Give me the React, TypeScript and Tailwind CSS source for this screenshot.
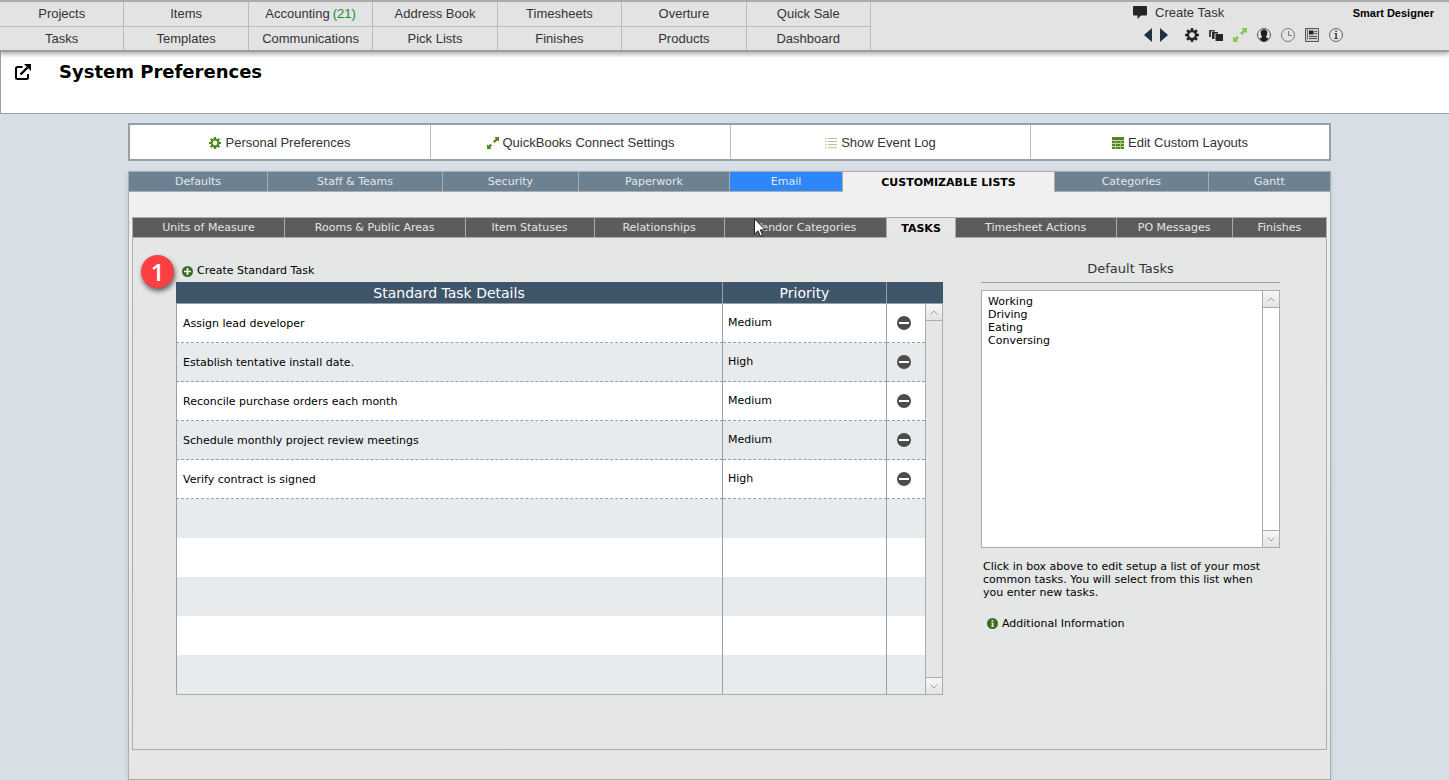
import { useState, type ReactNode } from 'react'
import clsx from 'clsx'

const NAV = [
  ['Projects', 'Items', 'Accounting', 'Address Book', 'Timesheets', 'Overture', 'Quick Sale'],
  ['Tasks', 'Templates', 'Communications', 'Pick Lists', 'Finishes', 'Products', 'Dashboard'],
]

const MAIN_TABS = [
  { label: 'Defaults', size: 'flex-[139]' },
  { label: 'Staff & Teams', size: 'flex-[175]' },
  { label: 'Security', size: 'flex-[136]' },
  { label: 'Paperwork', size: 'flex-[151]' },
  { label: 'Email', size: 'flex-[113]' },
  { label: 'Customizable Lists', size: 'flex-[212]' },
  { label: 'Categories', size: 'flex-[154]' },
  { label: 'Gantt', size: 'flex-[122]' },
]

const LIST_TABS = [
  { label: 'Units of Measure', size: 'flex-[152]' },
  { label: 'Rooms & Public Areas', size: 'flex-[181]' },
  { label: 'Item Statuses', size: 'flex-[129]' },
  { label: 'Relationships', size: 'flex-[130]' },
  { label: 'Vendor Categories', size: 'flex-[163]' },
  { label: 'Tasks', size: 'flex-[68]' },
  { label: 'Timesheet Actions', size: 'flex-[161]' },
  { label: 'PO Messages', size: 'flex-[116]' },
  { label: 'Finishes', size: 'flex-[94]' },
]

const TASKS = [
  { details: 'Assign lead developer', priority: 'Medium' },
  { details: 'Establish tentative install date.', priority: 'High' },
  { details: 'Reconcile purchase orders each month', priority: 'Medium' },
  { details: 'Schedule monthly project review meetings', priority: 'Medium' },
  { details: 'Verify contract is signed', priority: 'High' },
]

const ROW_COUNT = 10

/* Icons */

const GearIcon = ({ className }: { className?: string }) => (
  <svg viewBox="0 0 14 14" className={className} fill="none" stroke="currentColor">
    <circle cx="7" cy="7" r="4" strokeWidth="2.4" />
    {[0, 45, 90, 135].map(angle => (
      <path
        key={angle}
        d="M7 0v2.4M7 11.6V14"
        strokeWidth="2.6"
        transform={`rotate(${angle} 7 7)`}
      />
    ))}
  </svg>
)

const ExpandIcon = ({ className }: { className?: string }) => (
  <svg viewBox="0 0 14 14" className={className} fill="currentColor">
    <path d="M8.500 0H14v5.500l-1.700-1.700-3.300 3.300-2-2 3.300-3.300zM0 8.500l1.700 1.700 2.300-2.300 2 2-2.300 2.300L5.500 14H0z" />
  </svg>
)

const ListIcon = () => (
  <svg viewBox="0 0 12 12" className="size-3" fill="none" stroke="#a9c88b">
    <path d="M0 1.5h1.5M3 1.5h9M0 4.5h1.5M3 4.5h9M0 7.5h1.5M3 7.5h9" />
    <path d="M0 10.500h1.500M3 10.500h9" stroke="#cfdfbf" strokeWidth="2" />
  </svg>
)

const GridIcon = () => (
  <svg viewBox="0 0 12 12" className="size-3">
    <path fill="#54861f" d="M0 0h12v12H0z" />
    <path stroke="#c6d8b2" d="M0 3.5h12M0 6.5h12M0 9.5h12" />
    <path stroke="#a3bf84" d="M3.5 3v9M8.5 3v9" />
  </svg>
)

const SpeechIcon = () => (
  <svg viewBox="0 0 14 13" className="h-[13px] w-3.5" fill="#262626">
    <path d="M1 0h12q1 0 1 1v7.5q0 1-1 1H8L4.5 13V9.5H1q-1 0-1-1V1q0-1 1-1z" />
  </svg>
)

const StackIcon = () => (
  <svg viewBox="0 0 14 14" className="size-3.5" fill="#262626">
    <path d="M0 2h6v1.500H2V9H0z" fill="#444" />
    <path d="M3 4h6v1.500H5.500V11H3z" />
    <path d="M6.500 6H14v7H6.500z" />
  </svg>
)

const PersonIcon = () => (
  <svg viewBox="0 0 14 14" className="size-3.5">
    <circle cx="7" cy="7" r="6.5" fill="none" stroke="#555" />
    <path
      fill="#1d1d1d"
      d="M7 1.500c2.200 0 3.300 1.500 3.300 3.400 0 1.300-.5 2.600-1.200 3.300v1l2.400 1.300A6.200 6.200 0 0 1 7 13.500a6.200 6.200 0 0 1-4.500-3L4.900 9.200v-1C4.200 7.500 3.700 6.200 3.700 4.900 3.700 3 4.800 1.500 7 1.500z"
    />
  </svg>
)

const ClockIcon = () => (
  <svg viewBox="0 0 14 14" className="size-3.5" fill="none" stroke="#777">
    <circle cx="7" cy="7" r="6.5" />
    <path d="M7.500 3v4.500H11" />
  </svg>
)

const NewsIcon = () => (
  <svg viewBox="0 0 14 14" className="size-3.5" fill="none" stroke="#555">
    <path d="M.5 .5h13v13H.5z" fill="#d0d0d0" />
    <path d="M2.500 1v10.500" stroke="#777" />
    <path d="M4 2.500h4.500v4H4z" fill="#222" stroke="none" />
    <path d="M9.500 3.500h2.500M9.500 5.500h2.500M4 8.500h8M4 10.500h8" />
  </svg>
)

const InfoIcon = () => (
  <svg viewBox="0 0 14 14" className="size-3.5" fill="none" stroke="#444">
    <circle cx="7" cy="7" r="6.5" stroke="#666" />
    <path d="M5.500 5.500H7M5.300 10.500h3.600" />
    <path d="M7.100 5v5.500" strokeWidth="1.600" />
    <path d="M6.300 2.600h1.600v1.500H6.300z" fill="#444" stroke="none" />
  </svg>
)

const PopOutIcon = () => (
  <svg viewBox="0 0 16 16" className="size-4" fill="none" stroke="#000" strokeWidth="2">
    <path d="M7.500 3H2.500Q1 3 1 4.500v9Q1 15 2.500 15h9q1.500 0 1.500-1.500V10" />
    <path d="M5.500 10.500l7-7" strokeWidth="2.400" />
    <path d="M9 0h7v7z" fill="#000" stroke="none" />
  </svg>
)

const PlusIcon = () => (
  <svg viewBox="0 0 12 12" className="size-[11px]">
    <circle cx="6" cy="6" r="6" fill="#3d6b1e" />
    <path d="M6 2.200v7.600M2.200 6h7.600" stroke="#fff" strokeWidth="1.800" />
  </svg>
)

const SolidInfoIcon = () => (
  <svg viewBox="0 0 12 12" className="size-[11px]">
    <circle cx="6" cy="6" r="6" fill="#3d6b1e" />
    <path d="M5 2.200h2v1.600H5zM4.500 4.800H7v3.700h.8v1H4.500v-1h.7V5.800h-.7z" fill="#e5e7e6" />
  </svg>
)

const MinusIcon = () => (
  <svg viewBox="0 0 14 14" className="size-3.5">
    <circle cx="7" cy="7" r="7" fill="#4c4c4c" />
    <path d="M2 6h10v2H2z" fill="#fff" />
  </svg>
)

const PointerIcon = () => (
  <svg viewBox="0 0 12 19" className="h-[19px] w-3">
    <path
      d="M.5.8v15.400l3.500-3.400 2.300 5.300 2.300-1-2.300-5.200h5z"
      fill="#fff"
      stroke="#1a1f33"
    />
  </svg>
)

/* Parts */

const TabStrip = ({ tabs, active, dark, onSelect }: {
  tabs: { label: string; size: string }[]
  active: string
  dark?: boolean
  onSelect: (label: string) => void
}) => (
  <div role="tablist" className="flex h-[21px] border-l border-t border-[#acacac]">
    {tabs.map(({ label, size }) => {
      const isActive = label === active
      return (
        <button
          key={label}
          role="tab"
          aria-selected={isActive}
          onClick={() => onSelect(label)}
          className={clsx(
            'whitespace-nowrap border-r border-[#acacac] pt-px text-[11px] leading-[18px]',
            size,
            isActive && 'font-bold uppercase text-black',
            isActive && (dark ? 'bg-[#e6e8e7]' : 'bg-[#f0f0f0]'),
            !isActive && 'border-b text-[#e6e6e6]',
            !isActive && dark && 'bg-[#5c5c5c]',
            !isActive && !dark && (label === 'Email' ? 'bg-[#2e86fb]' : 'bg-[#6c8293]')
          )}
        >
          {label}
        </button>
      )
    })}
  </div>
)

const ScrollButton = ({ down }: { down?: boolean }) => (
  <button
    aria-label={down ? 'Scroll down' : 'Scroll up'}
    className={clsx(
      'flex h-[17px] w-4 items-center justify-center border-[#acacac] bg-linear-to-b from-[#f6f6f6] to-[#e4e4e4]',
      down ? 'border-t' : 'border-b'
    )}
  >
    <svg viewBox="0 0 8 5" className="h-[5px] w-2" fill="none" stroke="#a0a0a0">
      <path d={down ? 'M.5.5L4 4 7.500.5' : 'M.5 4.500L4 1l3.500 3.500'} />
    </svg>
  </button>
)

const ToolButton = ({ label, children }: { label: string; children: ReactNode }) => (
  <button aria-label={label} className="flex size-6 items-center justify-center">
    {children}
  </button>
)

const Header = () => (
  <header className="relative z-10 flex h-[52px] border-b-2 border-t-2 border-b-[#979fa6] border-t-[#ababab] bg-[#e3e3e3] font-['Liberation_Sans',Arial,sans-serif] text-[13px] text-[#333] shadow-[0_2px_5px_rgba(0,0,0,0.35)]">
    <nav className="grid flex-1 grid-cols-7">
      {NAV.map((row, rowIndex) =>
        row.map(label => (
          <a
            key={label}
            href="#"
            className={clsx(
              'flex items-center justify-center border-r border-[#bababa]',
              rowIndex === 0 && 'border-b'
            )}
          >
            {label}
            {label === 'Accounting' && <span className="ml-[3px] text-[#0f8f1f]">(21)</span>}
          </a>
        ))
      )}
    </nav>

    <div className="flex w-[578px] justify-between pl-[262px] pr-[15px]">
      <div>
        <button className="flex h-[21px] items-center gap-2">
          <SpeechIcon />
          Create Task
        </button>
        <div className="flex pl-[7px]">
          <button aria-label="Previous" className="flex h-6 w-4 items-center justify-center">
            <svg viewBox="0 0 8 14" className="h-3.5 w-2" fill="#22303f"><path d="M8 0v14L0 7z" /></svg>
          </button>
          <button aria-label="Next" className="mr-2 flex h-6 w-4 items-center justify-center">
            <svg viewBox="0 0 8 14" className="h-3.5 w-2" fill="#22303f"><path d="M0 0v14l8-7z" /></svg>
          </button>
          <ToolButton label="Settings"><GearIcon className="size-3.5 text-[#262626]" /></ToolButton>
          <ToolButton label="Windows"><StackIcon /></ToolButton>
          <ToolButton label="Expand"><ExpandIcon className="size-3.5 text-[#86c84b]" /></ToolButton>
          <ToolButton label="Account"><PersonIcon /></ToolButton>
          <ToolButton label="Time"><ClockIcon /></ToolButton>
          <ToolButton label="News"><NewsIcon /></ToolButton>
          <ToolButton label="Help"><InfoIcon /></ToolButton>
        </div>
      </div>
      <span className="text-[11px] font-bold leading-[22px] text-black">Smart Designer</span>
    </div>
  </header>
)

const Shortcuts = () => {
  const items = [
    { label: 'Personal Preferences', icon: <GearIcon className="size-3 text-[#4d8a1a]" /> },
    { label: 'QuickBooks Connect Settings', icon: <ExpandIcon className="size-3 text-[#4d8a1a]" /> },
    { label: 'Show Event Log', icon: <ListIcon /> },
    { label: 'Edit Custom Layouts', icon: <GridIcon /> },
  ]

  return (
    <div className="grid h-[38px] grid-cols-[301fr_300fr_300fr_298fr] border-2 border-[#989fa7] bg-white font-['Liberation_Sans',Arial,sans-serif] text-[13px] text-[#333]">
      {items.map(({ label, icon }) => (
        <button
          key={label}
          className="flex items-center justify-center gap-1 border-r border-[#bcbcbc] pt-px last:border-r-0"
        >
          {icon}
          {label}
        </button>
      ))}
    </div>
  )
}

const TaskTable = () => (
  <table className="w-full table-fixed border-separate border-spacing-0 border-b border-[#acacac] text-[11px]">
    <colgroup>
      <col />
      <col className="w-[164px]" />
      <col className="w-[38px]" />
      <col className="w-[18px]" />
    </colgroup>
    <thead>
      <tr className="h-[22px] bg-[#3f566a] text-sm leading-5 text-white">
        <th className="border-b border-r border-[#989fa7] p-0 font-normal">Standard Task Details</th>
        <th className="border-b border-r border-[#989fa7] p-0 font-normal">Priority</th>
        <th colSpan={2} aria-label="Remove" className="border-b border-[#989fa7] p-0" />
      </tr>
    </thead>
    <tbody>
      {Array.from({ length: ROW_COUNT }, (_, i) => {
        const task = TASKS[i]
        const cell = clsx('border-[#989fa7] pb-0', task && 'border-b [border-bottom-style:dashed]')
        return (
          <tr key={i} className="h-[39px] odd:bg-white even:bg-[#e7ebee]">
            <td className={clsx(cell, 'border-x px-1.5 pt-0.5')}>{task?.details}</td>
            <td className={clsx(cell, 'border-r px-[5px] pt-0')}>{task?.priority}</td>
            <td className={clsx(cell, 'px-0 pt-0')}>
              {task && (
                <button aria-label={`Remove ${task.details}`} className="mx-auto block pr-1">
                  <MinusIcon />
                </button>
              )}
            </td>
            {i === 0 && (
              <td rowSpan={ROW_COUNT} className="border-x border-[#acacac] bg-[#e5e7e6] p-0">
                <div className="flex h-[390px] flex-col justify-between">
                  <ScrollButton />
                  <ScrollButton down />
                </div>
              </td>
            )}
          </tr>
        )
      })}
    </tbody>
  </table>
)

const DefaultTasks = () => (
  <aside className="w-[299px] shrink-0 text-[11px] leading-[13px]">
    <div className="flex h-[45px] items-end justify-center border-b border-[#989fa7] pb-[5px]">
      <label htmlFor="default-tasks" className="text-[13px] leading-4 text-[#333]">Default Tasks</label>
    </div>
    <div className="mt-[7px] flex h-[258px] border border-[#acacac] bg-white">
      <textarea
        id="default-tasks"
        className="min-w-0 flex-1 resize-none overflow-hidden px-1.5 py-1 outline-none"
        defaultValue={'Working\nDriving\nEating\nConversing'}
      />
      <div className="flex flex-col justify-between border-l border-[#acacac]">
        <ScrollButton />
        <ScrollButton down />
      </div>
    </div>
    <p className="mt-3 pl-0.5 pr-3">
      Click in box above to edit setup a list of your most common tasks. You will select from this list when you enter new tasks.
    </p>
    <button className="mt-4 flex h-4 items-center gap-1 pl-1.5">
      <SolidInfoIcon />
      Additional Information
    </button>
  </aside>
)

export default function App() {
  const [mainTab, setMainTab] = useState('Customizable Lists')
  const [listTab, setListTab] = useState('Tasks')

  return (
    <div className="min-h-screen bg-[#d7dee6] font-['DejaVu_Sans',Verdana,sans-serif] text-black">
      <Header />

      <div className="flex h-[62px] items-start gap-7 border-b border-l border-[#989fa7] bg-white pl-[14px] pt-2">
        <button aria-label="Open in new window" className="pt-1">
          <PopOutIcon />
        </button>
        <h1 className="text-lg font-bold leading-6">System Preferences</h1>
      </div>

      <main className="ml-32 mr-[118px] pt-[9px]">
        <Shortcuts />

        <div className="mt-2.5 shadow-[0_2px_5px_rgba(0,0,0,0.12)]">
          <TabStrip tabs={MAIN_TABS} active={mainTab} onSelect={setMainTab} />
          <div className="border-x border-b border-[#acacac] bg-linear-to-b from-[#f0f0f0] to-[#e6e6e6] pb-[29px] pl-[3px] pr-[3px] pt-[25px]">
            <TabStrip dark tabs={LIST_TABS} active={listTab} onSelect={setListTab} />
            <section className="relative flex gap-[38px] border-x border-b border-[#acacac] bg-[#e5e7e6] pb-[54px] pl-[43px] pr-[46px]">
              <div className="min-w-0 flex-1">
                <div className="flex h-11 items-end pb-[3px] pl-1.5">
                  <button className="flex h-4 items-center gap-1 text-[11px]">
                    <PlusIcon />
                    Create Standard Task
                  </button>
                </div>
                <TaskTable />
              </div>
              <DefaultTasks />

              <span className="absolute left-2 top-[17px] flex size-[33px] items-center justify-center rounded-full bg-[#fb3f43] font-['Open_Sans',sans-serif] text-2xl font-semibold text-white shadow-[1px_3px_5px_rgba(0,0,0,0.6)]">
                1
              </span>
              <span className="pointer-events-none absolute -top-5 left-[52%] pl-px">
                <PointerIcon />
              </span>
            </section>
          </div>
        </div>
      </main>
    </div>
  )
}
